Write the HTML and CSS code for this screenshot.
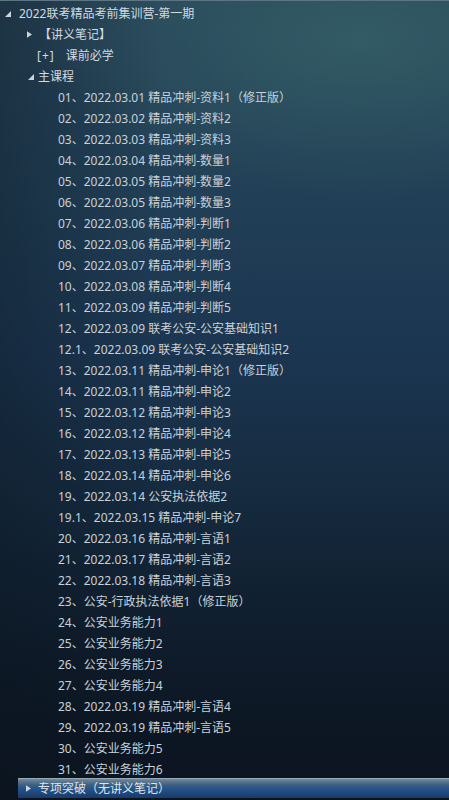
FILE: index.html
```html
<!DOCTYPE html>
<html lang="zh-CN">
<head>
<meta charset="utf-8">
<title>2022联考精品考前集训营-第一期</title>
<link rel="stylesheet" href="styles.css">
</head>
<body>
<div class="panel">
  <ul class="tree">
    <li class="node">
      <div class="row lvl0"><svg class="tri" viewBox="0 0 6 6"><polygon points="6,0 6,6 0,6"/></svg><span>2022联考精品考前集训营-第一期</span></div>
      <ul class="tree">
        <li><div class="row lvl1"><svg class="tri right" viewBox="0 0 6 8"><polygon points="0,0 6,4 0,8"/></svg><span>【讲义笔记】</span></div></li>
        <li><div class="row lvl1b"><span class="plus">[+]</span><span>课前必学</span></div></li>
        <li class="node">
          <div class="row lvl1c"><svg class="tri" viewBox="0 0 6 6"><polygon points="6,0 6,6 0,6"/></svg><span>主课程</span></div>
          <ul class="tree items">
            <li class="row item">01、2022.03.01 精品冲刺-资料1（修正版）</li>
            <li class="row item">02、2022.03.02 精品冲刺-资料2</li>
            <li class="row item">03、2022.03.03 精品冲刺-资料3</li>
            <li class="row item">04、2022.03.04 精品冲刺-数量1</li>
            <li class="row item">05、2022.03.05 精品冲刺-数量2</li>
            <li class="row item">06、2022.03.05 精品冲刺-数量3</li>
            <li class="row item">07、2022.03.06 精品冲刺-判断1</li>
            <li class="row item">08、2022.03.06 精品冲刺-判断2</li>
            <li class="row item">09、2022.03.07 精品冲刺-判断3</li>
            <li class="row item">10、2022.03.08 精品冲刺-判断4</li>
            <li class="row item">11、2022.03.09 精品冲刺-判断5</li>
            <li class="row item">12、2022.03.09 联考公安-公安基础知识1</li>
            <li class="row item">12.1、2022.03.09 联考公安-公安基础知识2</li>
            <li class="row item">13、2022.03.11 精品冲刺-申论1（修正版）</li>
            <li class="row item">14、2022.03.11 精品冲刺-申论2</li>
            <li class="row item">15、2022.03.12 精品冲刺-申论3</li>
            <li class="row item">16、2022.03.12 精品冲刺-申论4</li>
            <li class="row item">17、2022.03.13 精品冲刺-申论5</li>
            <li class="row item">18、2022.03.14 精品冲刺-申论6</li>
            <li class="row item">19、2022.03.14 公安执法依据2</li>
            <li class="row item">19.1、2022.03.15 精品冲刺-申论7</li>
            <li class="row item">20、2022.03.16 精品冲刺-言语1</li>
            <li class="row item">21、2022.03.17 精品冲刺-言语2</li>
            <li class="row item">22、2022.03.18 精品冲刺-言语3</li>
            <li class="row item">23、公安-行政执法依据1（修正版）</li>
            <li class="row item">24、公安业务能力1</li>
            <li class="row item">25、公安业务能力2</li>
            <li class="row item">26、公安业务能力3</li>
            <li class="row item">27、公安业务能力4</li>
            <li class="row item">28、2022.03.19 精品冲刺-言语4</li>
            <li class="row item">29、2022.03.19 精品冲刺-言语5</li>
            <li class="row item">30、公安业务能力5</li>
            <li class="row item">31、公安业务能力6</li>
          </ul>
        </li>
        <li><div class="row lvl1d selected"><svg class="tri right" viewBox="0 0 6 8"><polygon points="0,0 6,4 0,8"/></svg><span>专项突破（无讲义笔记）</span></div></li>
      </ul>
    </li>
  </ul>
</div>
</body>
</html>
```
FILE: styles.css
```css
html, body {
  margin: 0;
  padding: 0;
}
body {
  width: 449px;
  height: 800px;
  overflow: hidden;
  font-family: "Noto Sans", "Noto Sans CJK SC", sans-serif;
  font-size: 12px;
  color: #d3dae0;
}
.panel {
  height: 800px;
  box-sizing: border-box;
  padding-top: 2px;
  border-top: 1px solid #5d7482;
  background:
    radial-gradient(ellipse 320px 160px at 360px 40px, rgba(60, 110, 110, 0.55), rgba(60, 110, 110, 0) 100%),
    linear-gradient(90deg, rgba(10, 20, 30, 0.35) 0px, rgba(10, 20, 30, 0) 160px),
    linear-gradient(180deg, #28465a 0px, #213f56 200px, #1b3550 360px, #152a3e 500px, #0f1c2b 640px, #0b131e 800px);
}
.tree {
  list-style: none;
  margin: 0;
  padding: 0;
}
.row {
  height: 21px;
  line-height: 21px;
  white-space: nowrap;
  display: flex;
  align-items: center;
}
.tri {
  width: 6px;
  height: 6px;
  fill: #cdd5dc;
  flex: none;
}
.tri.right {
  width: 5px;
  height: 7px;
}
.lvl0 { padding-left: 5px; }
.lvl0 .tri { margin-right: 8px; }
.lvl1 { padding-left: 27px; }
.lvl1 .tri { margin-right: 7px; }
.lvl1b { padding-left: 37px; }
.plus { margin-right: 11px; letter-spacing: 1px; }
.lvl1c { padding-left: 28px; }
.lvl1c .tri { margin-right: 4px; }
.item { padding-left: 58px; color: #c9d1d8; }
.lvl1d { padding-left: 26px; }
.lvl1d .tri { margin-right: 7px; }
.selected {
  margin-left: 18px;
  padding-left: 8px;
  margin-top: -2px;
  height: 20px;
  background: linear-gradient(180deg, #7d93a3 0px, #5f7b92 3px, #3d5f80 7px, #24538a 11px, #1d4578 16px, #1a3a66 20px);
  box-shadow: inset 0 1px 0 #95a9b7;
  color: #dfe5ea;
}
```
